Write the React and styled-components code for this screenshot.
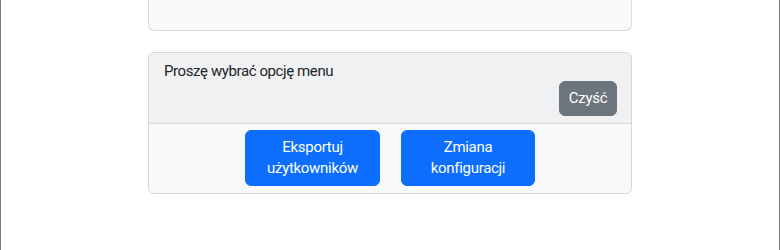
import styled, { createGlobalStyle } from 'styled-components'

const Global = createGlobalStyle`
    html, body {
        margin: 0;
        background: #fff;
        font-family: Roboto, "Open Sans", sans-serif;
        color: #212529;
    }
`

//Page frame with the grey side rules
const Frame = styled.div`
    box-sizing: border-box;
    min-height: 250px;
    border-left: 1px solid #7a7a7a;
    border-right: 1px solid #7a7a7a;
`

const Column = styled.div`
    width: 484px;
    margin: 0 auto;
`

//Bottom of the card above, scrolled out of view
const TopCard = styled.div`
    box-sizing: border-box;
    height: 31px;
    background: #f8f9fa;
    border: 1px solid #dadcde;
    border-top: none;
    border-radius: 0 0 6px 6px;
`

const MenuCard = styled.div`
    margin-top: 21px;
    background: #f8f9fa;
    border: 1px solid #d5d7d9;
    border-radius: 6px;
    overflow: hidden;
`

const MenuHeader = styled.div`
    display: flex;
    flex-direction: column;
    padding: 8px 14px 7px 15px;
    background: #f0f1f2;
    border-bottom: 1px solid #d5d7d9;
`

const Prompt = styled.div`
    font-size: 15px;
    line-height: 20px;
    letter-spacing: -0.4px;
`

const ActionRow = styled.div`
    display: flex;
    justify-content: flex-end;
`

const Button = styled.button`
    box-sizing: border-box;
    font-family: inherit;
    font-size: 15px;
    line-height: 21px;
    letter-spacing: -0.3px;
    color: #fff;
    border: 1px solid ${p => p.$bg};
    background: ${p => p.$bg};
    border-radius: 6px;
    padding: 6px 0;
    width: ${p => p.$width};
    cursor: pointer;
`

const MenuBody = styled.div`
    display: flex;
    justify-content: center;
    gap: 21px;
    padding: 6px 15px 7px;
`

export default function App() {
    return (
        <>
            <Global />
            <Frame>
                <Column>
                    <TopCard />
                    <MenuCard>
                        <MenuHeader>
                            <Prompt>Proszę wybrać opcję menu</Prompt>
                            <ActionRow>
                                <Button $bg="#6c757d" $width="58px">Czyść</Button>
                            </ActionRow>
                        </MenuHeader>
                        <MenuBody>
                            <Button $bg="#0d6efd" $width="135px">Eksportuj<br />użytkowników</Button>
                            <Button $bg="#0d6efd" $width="134px">Zmiana<br />konfiguracji</Button>
                        </MenuBody>
                    </MenuCard>
                </Column>
            </Frame>
        </>
    )
}
